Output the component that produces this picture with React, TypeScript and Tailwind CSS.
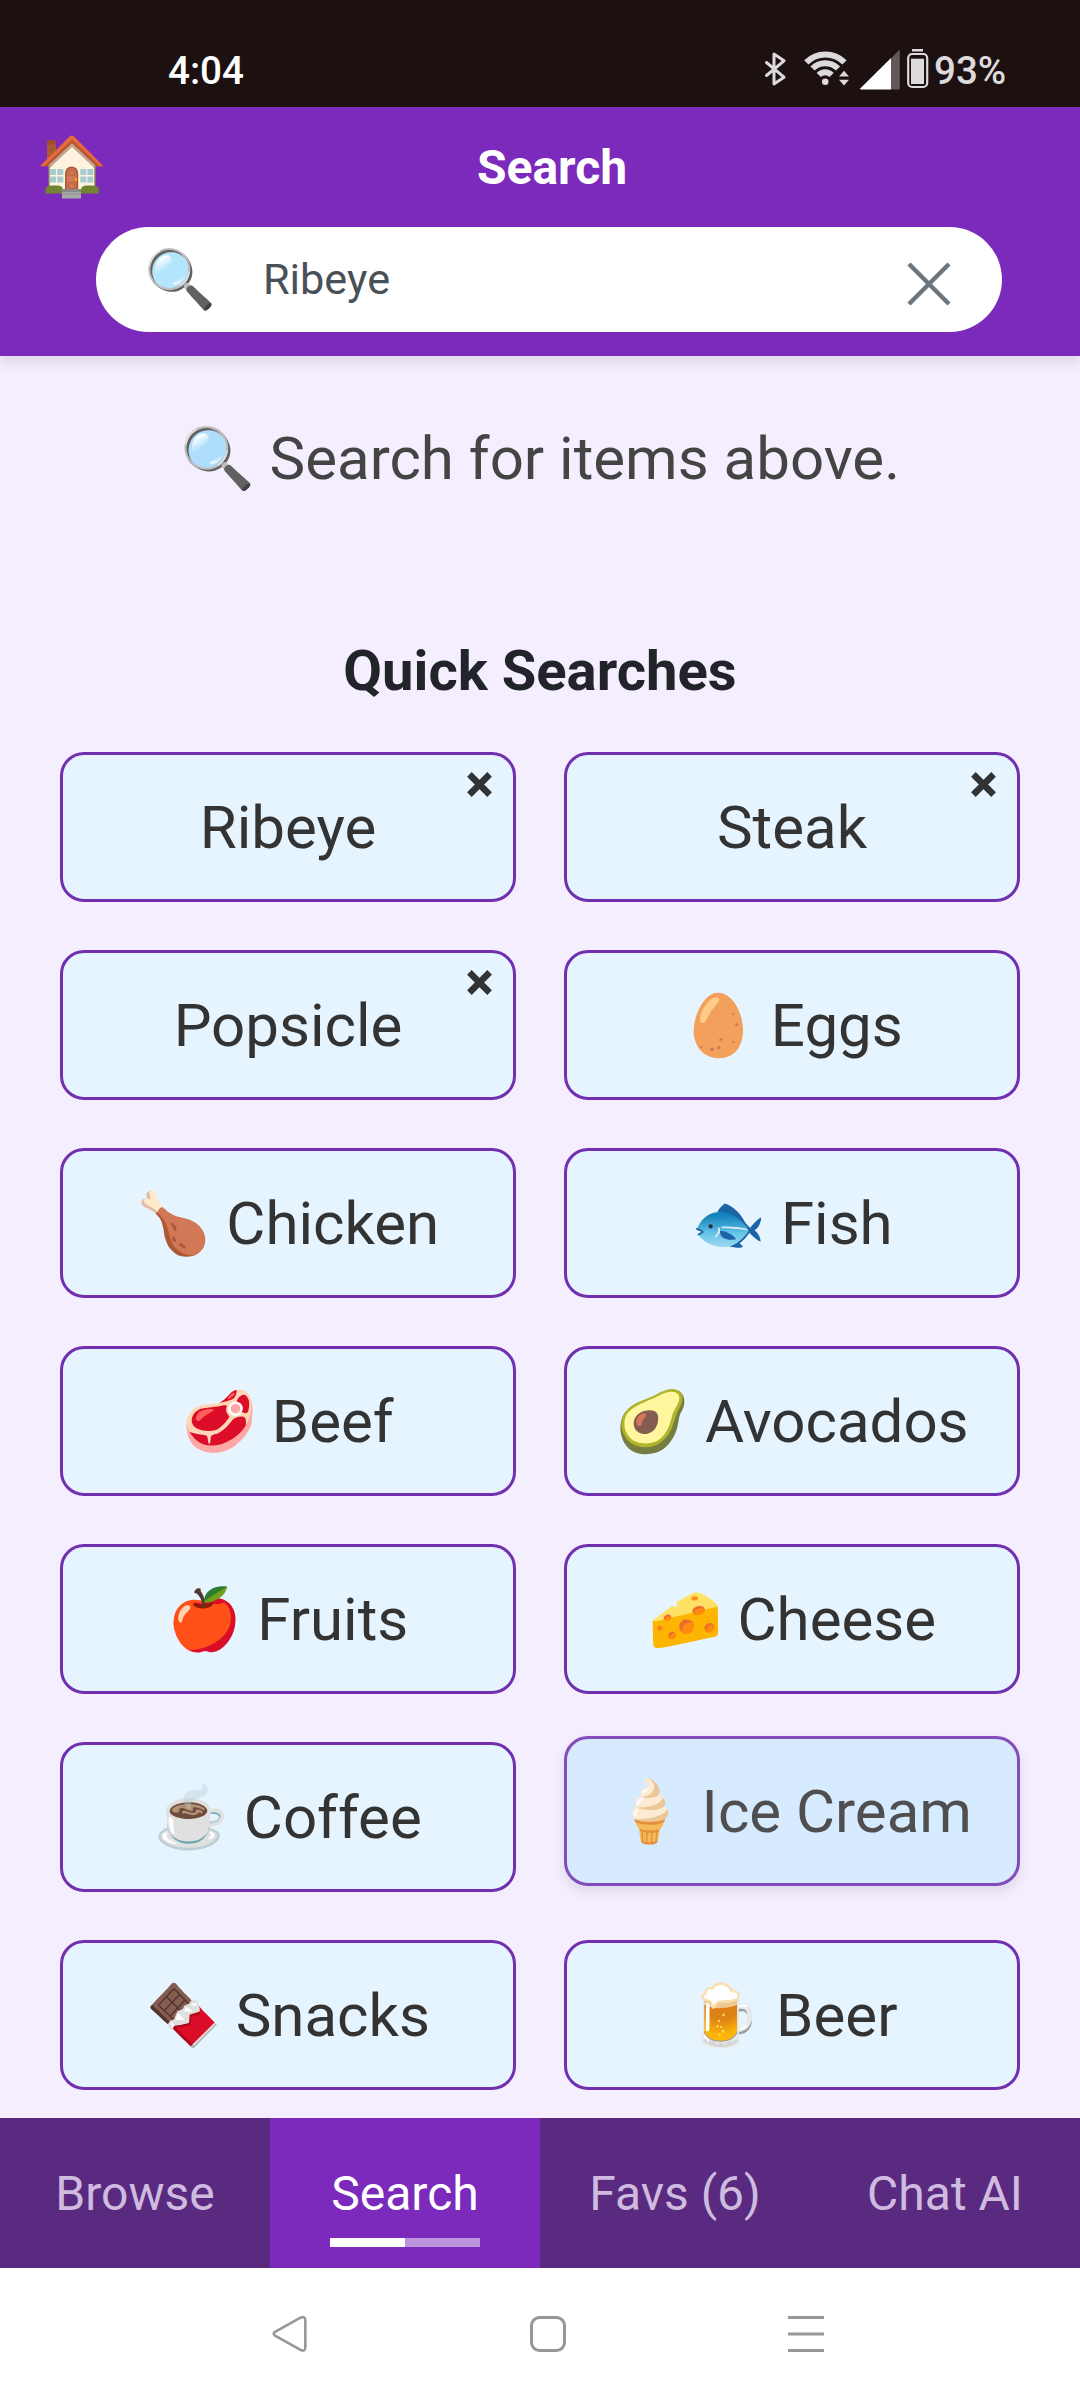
type Item = { emoji?: string; label: string; removable?: boolean; active?: boolean };

const items: Item[] = [
  { label: 'Ribeye', removable: true },
  { label: 'Steak', removable: true },
  { label: 'Popsicle', removable: true },
  { emoji: '🥚', label: 'Eggs' },
  { emoji: '🍗', label: 'Chicken' },
  { emoji: '🐟', label: 'Fish' },
  { emoji: '🥩', label: 'Beef' },
  { emoji: '🥑', label: 'Avocados' },
  { emoji: '🍎', label: 'Fruits' },
  { emoji: '🧀', label: 'Cheese' },
  { emoji: '☕', label: 'Coffee' },
  { emoji: '🍦', label: 'Ice Cream', active: true },
  { emoji: '🍫', label: 'Snacks' },
  { emoji: '🍺', label: 'Beer' },
];

const tabs = ['Browse', 'Search', 'Favs (6)', 'Chat AI'];

function StatusIcons() {
  return (
    <svg width="166" height="44" viewBox="764 48 166 44" className="block">
      <path d="M766.5 62.5 784 77.2 774 84V54l10 6.8-17.500 14.700" fill="none" stroke="#dddadb" strokeWidth="3" strokeLinejoin="round" strokeLinecap="round" />
      <g fill="none" stroke="#dddadb" strokeWidth="6">
        <path d="M806.300 62.300a27 27 0 0 1 38.200 0" />
        <path d="M812.500 68.500a18 18 0 0 1 25.500 0" />
        <path d="M818.800 75a9 9 0 0 1 12.800 0" />
      </g>
      <circle cx="825.2" cy="81.700" r="3.300" fill="#dddadb" />
      <path d="M839 76.500h10l-5-5.700zM839 79.800h10l-5 5.700z" fill="#dddadb" />
      <path d="M891 58.500 898.300 50.700q1.500-1.300 1.500 .500V88q0 1.500-1.500 1.500H891z" fill="#615857" />
      <path d="M891 58v31.500H861q-1.500 0-.500-1.300z" fill="#fff" />
      <path d="M912 49h11v2.500h-11z" fill="#dddadb" />
      <rect x="908.200" y="54" width="19" height="33" rx="4" fill="none" stroke="#dddadb" strokeWidth="2.200" />
      <rect x="911" y="58.700" width="13" height="25.300" fill="#dddadb" />
    </svg>
  );
}

function House() {
  return (
    <svg width="64" height="64" viewBox="0 0 64 64" className="block shrink-0">
      <path d="M7 5.500h9v14l-9 8z" fill="#aa5a35" />
      <path d="M7 5.500h9v4H7z" fill="#9c4b2b" />
      <path d="M9 30 32 8l23 22v28H9z" fill="#fff3e0" />
      <path d="M8 31 32 7.500 56 31v3.500L32 12 8 34.500z" fill="#bfa68d" />
      <path d="M8.200 31h1.400v24H8.200zM54.400 31h1.400v24h-1.400z" fill="#8d6e54" />
      <path d="M0 31.300 29.500 1.500q2.300-2 4.600 0L63.500 31.300H57L32 7 7 31.300z" fill="#e66a3c" />
      <path d="M4 31.300 32 4.800 60 31.300h-3.200L32 8.200 7 31.300z" fill="#b9562f" />
      <g fill="#a5cdd0">
        <path d="M10 34h6v6h-6zM17.300 34h6v6h-6zM10 41.500h6v6h-6zM17.300 41.500h6v6h-6z" />
        <path d="M40.300 34h6v6h-6zM47.300 34h6v6h-6zM40.300 41.500h6v6h-6zM47.300 41.500h6v6h-6z" />
      </g>
      <path d="M25 55V38a6.600 6.600 0 0 1 13.200 0v17z" fill="#aa5a35" />
      <path d="M26.800 54V38a4.800 4.800 0 0 1 9.600 0v16z" fill="#d27856" />
      <path d="M28.500 40v-2a3.200 3.200 0 0 1 6.300 0v2zM28.500 47.500h6.300v6h-6.300z" fill="none" stroke="#aa5a35" strokeWidth=".8" />
      <circle cx="36" cy="44.500" r="1.200" fill="#ffb300" />
      <path d="M5.500 58.500V54q1-3.500 5-3.500h7q5 0 5.500 4v4zM41 58.500v-4q.5-4 5.500-4H54q4 0 4.800 3.500v4.500z" fill="#728331" />
      <path d="M22 54h19v9.500H22z" fill="#a8a8a8" />
      <path d="M22 54h19v3H22z" fill="#8b8b8b" />
      <path d="M22 58.500h19v1H22z" fill="#929292" />
    </svg>
  );
}

function QuickSearch({ item }: { item: Item }) {
  return (
    <button
      className={
        'relative flex h-[150px] w-full items-center justify-center whitespace-pre rounded-3xl border-[3px] border-[#7230b0] pt-0.5 text-[60px] leading-[90px] text-[#333] ' +
        (item.active ? '-translate-y-1.5 bg-[#d2ebff] opacity-85 shadow-[0_6px_12px_rgba(0,0,0,0.1)]' : 'bg-[#e6f4ff]')
      }
    >
      <span>{item.emoji ? `${item.emoji} ${item.label}` : item.label}</span>
      {item.removable && (
        <svg width="25" height="25" viewBox="0 0 25 25" className="absolute right-[21px] top-[17px]">
          <path d="M2.400 2.400 22.600 22.600M22.600 2.400 2.400 22.600" stroke="#333" strokeWidth="6.500" />
        </svg>
      )}
    </button>
  );
}

export default function App() {
  return (
    <div className="flex h-[2400px] w-[1080px] flex-col overflow-hidden bg-[#f5eeff] font-['Roboto','Noto_Color_Emoji',sans-serif]">
      <div className="flex h-[107px] shrink-0 items-start bg-[#1c1011] text-[38.600px] font-medium leading-[46px]">
        <span className="ml-[168px] mt-12 w-[596px] text-white">4:04</span>
        <div className="mt-12"><StatusIcons /></div>
        <span className="ml-[4px] mt-12 text-[#dddadb]">93%</span>
      </div>

      <header className="z-10 shrink-0 bg-[#7b2abb] pb-6 shadow-[0_6px_12px_rgba(0,0,0,0.1)]">
        <div className="flex h-[120px] items-center pl-10 pr-[80px]">
          <House />
          <h1 className="mt-0.5 flex-1 text-center text-[48px] font-bold leading-[72px] text-white">Search</h1>
        </div>
        <div className="ml-24 mr-[78px] flex h-[105px] items-center rounded-full bg-white pl-12 pr-[51px]">
          <span className="w-[119px] text-[57.600px] leading-[86px]">🔍</span>
          <span className="flex-1 text-[43.200px] leading-[65px] text-[#495057]">Ribeye</span>
          <svg width="44" height="44" viewBox="0 0 44 44" className="mt-[9px]">
            <path d="M2 2 42 42M42 2 2 42" stroke="#6c757d" strokeWidth="4.400" />
          </svg>
        </div>
      </header>

      <main className="flex-1 px-[60px] pt-[58px]">
        <p className="text-center text-[60px] leading-[90px] text-[#444]">🔍 Search for items above.</p>
        <h2 className="mt-[127px] text-center text-[56.200px] font-bold leading-[80px] text-[#212529]">Quick Searches</h2>
        <div className="mt-[41px] grid grid-cols-2 gap-12">
          {items.map((item) => (
            <QuickSearch key={item.label} item={item} />
          ))}
        </div>
      </main>

      <nav className="grid h-[150px] shrink-0 grid-cols-4 bg-[#5a2980]">
        {tabs.map((tab) => (
          <div
            key={tab}
            className={'flex flex-col items-center pt-[46px] text-[48px] leading-[60px] ' + (tab === 'Search' ? 'bg-[#7b2abb] text-white' : 'text-[#cebbdf]')}
          >
            <span>{tab}</span>
            {tab === 'Search' && (
              <div className="mt-[14px] flex h-[9px] w-[150px] bg-white/50">
                <div className="w-1/2 bg-white" />
              </div>
            )}
          </div>
        ))}
      </nav>

      <div className="flex h-[132px] shrink-0 items-start bg-white pt-12">
        <svg width="36" height="36" viewBox="0 0 36 36" className="ml-[272px]" fill="none" stroke="#979797">
          <path d="M3 15.800 28.500 1.700Q33 0 33.300 4V31.500Q33 36 28.500 33.800L3 19.700Q.500 17.800 3 15.800Z" strokeWidth="2.600" />
        </svg>
        <svg width="36" height="36" viewBox="0 0 36 36" className="ml-[222px]" fill="none" stroke="#979797" strokeWidth="3">
          <rect x="1.500" y="1.500" width="33" height="33" rx="8" />
        </svg>
        <svg width="36" height="36" viewBox="0 0 36 36" className="ml-[222px]" fill="none" stroke="#979797" strokeWidth="3">
          <path d="M0 1.500h36M0 18h36M0 34.500h36" />
        </svg>
      </div>
    </div>
  );
}
